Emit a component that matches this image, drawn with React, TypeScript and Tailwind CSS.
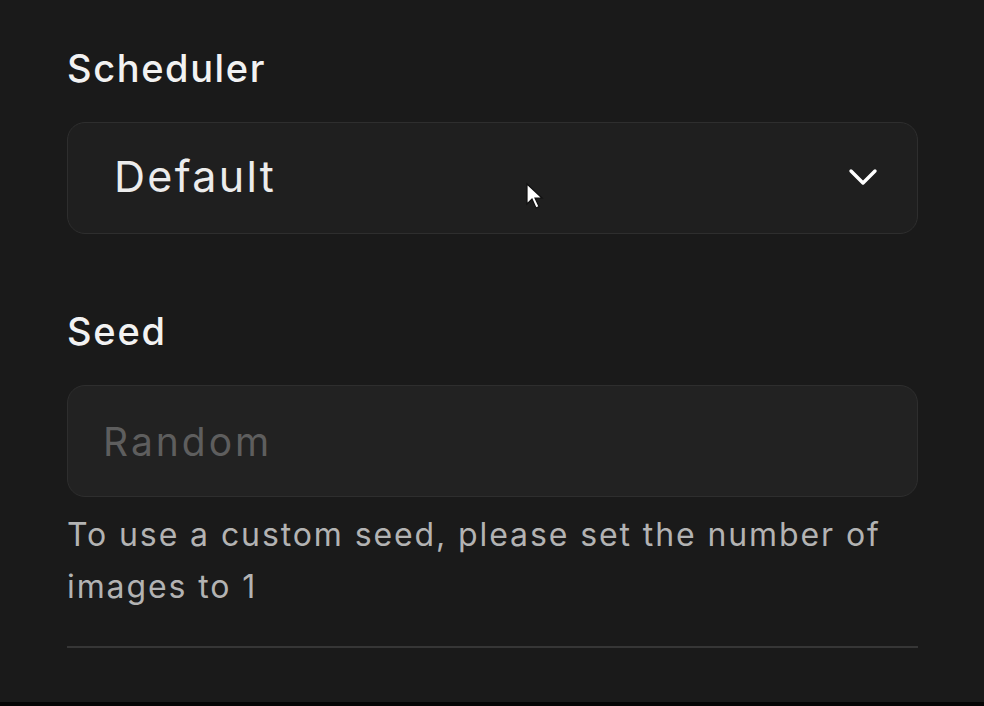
import { ChevronDown } from 'lucide-react';

function Cursor() {
  return (
    <svg className="pointer-events-none absolute left-[525px] top-[182px]" width="20" height="30" viewBox="0 0 20 30">
      <path d="M2 2 L2 22 L7 17 L11 26 L14 24.5 L10 16 L17 16 Z" fill="#ffffff" stroke="#111111" strokeWidth="1.2" />
    </svg>
  );
}

export default function App() {
  return (
    <div className="relative flex h-[706px] w-full flex-col bg-[#1a1a1a] font-['Inter',sans-serif]">
      <div className="flex flex-1 flex-col pl-[67px] pr-[66px] pt-[44px]">
        <label className="text-[38px] leading-[48px] font-medium tracking-[1.6px] text-[#f2f2f2]">Scheduler</label>
        <div className="mt-[30px] flex h-[112px] items-center justify-between rounded-[18px] border border-[#2e2e2e] bg-[#1f1f1f] pb-[3px] pl-[46px] pr-[30px]">
          <span className="text-[43px] leading-none tracking-[2.3px] text-[#ececec]">Default</span>
          <ChevronDown size={48} strokeWidth={1.7} className="text-white" />
        </div>

        <label className="mt-[73px] text-[38px] leading-[48px] font-medium tracking-[1.8px] text-[#f2f2f2]">Seed</label>
        <div className="mt-[30px] flex h-[112px] items-center rounded-[18px] border border-[#2e2e2e] bg-[#222222] pl-[35px]">
          <span className="text-[39px] leading-none tracking-[3px] text-[#5e5e5e]">Random</span>
        </div>
        <p className="mt-[12px] text-[32px] leading-[52px] tracking-[1.9px] text-[#b3b3b3]">
          To use a custom seed, please set the number of images to 1
        </p>
        <div className="mt-[33px] h-[2px] bg-[#363636]" />
      </div>
      <div className="h-[4px] bg-[#050505]" />
      <Cursor />
    </div>
  );
}
